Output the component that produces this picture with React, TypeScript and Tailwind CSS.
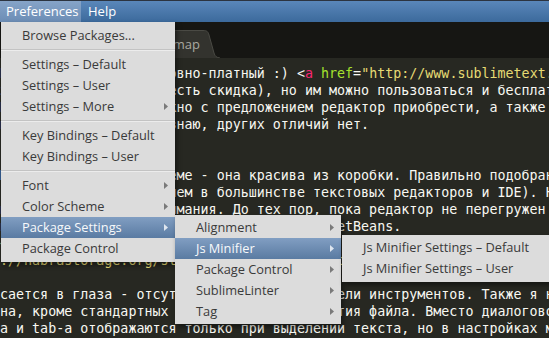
import { ReactNode } from 'react'

type Seg = [string, string]

interface CodeLine {
  pre?: string
  cols?: number
  segs: Seg[]
}

const W = 'text-[#f8f8f2]'
const P = 'text-[#f92672]'
const G = 'text-[#a6e22e]'
const Y = 'text-[#e6db74]'

const lines: CodeLine[] = [
  {
    pre: 'Редактор же, увы, усл',
    cols: 21,
    segs: [
      ['овно-платный :) ', W],
      ['<', W],
      ['a', P],
      [' ', W],
      ['href', G],
      ['=', W],
      ['"http://www.sublimetext.com/buy"', Y],
      ['>', W],
    ],
  },
  { pre: 'за $59 (для студентов ', cols: 21, segs: [['есть скидка), но им можно пользоваться и бесплатно.', W]] },
  { pre: 'Разница лишь в том, что о', cols: 21, segs: [['кно с предложением редактор приобрести, а также', W]] },
  { pre: 'появляется, и, нас', cols: 21, segs: [['знаю, других отличий нет.', W]] },
  { segs: [] },
  { segs: [] },
  { pre: 'Первое — цветовая сх', cols: 21, segs: [['еме - она красива из коробки. Правильно подобранная', W]] },
  { pre: '(куда приятнее, ', cols: 21, segs: [['чем в большинстве текстовых редакторов и IDE). На', W]] },
  { pre: 'и не отвлекает вн', cols: 21, segs: [['имания. До тех пор, пока редактор не перегружен', W]] },
  { pre: 'плагинами, он работает быстрее, чем ', cols: 41, segs: [['NetBeans.', W]] },
  { segs: [['<p><img src="http', Y]] },
  { segs: [['://habrastorage.org/storage2/3b1/1c8/8b5/3b11c88b5c1f.png"/></p>', Y]] },
  { segs: [] },
  { segs: [['сается в глаза - отсутствие какой-либо панели инструментов. Также я не нашёл', W]] },
  { segs: [['на, кроме стандартных окна поиска, и открытия файла. Вместо диалогового окна', W]] },
  { segs: [['а и tab-а отображаются только при выделении текста, но в настройках можно', W]] },
]

interface MenuEntry {
  label?: string
  sub?: boolean
  active?: boolean
  sep?: boolean
}

const mainMenu: MenuEntry[] = [
  { label: 'Browse Packages...' },
  { sep: true },
  { label: 'Settings – Default' },
  { label: 'Settings – User' },
  { label: 'Settings – More', sub: true },
  { sep: true },
  { label: 'Key Bindings – Default' },
  { label: 'Key Bindings – User' },
  { sep: true },
  { label: 'Font', sub: true },
  { label: 'Color Scheme', sub: true },
  { label: 'Package Settings', sub: true, active: true },
  { label: 'Package Control' },
]

const packageMenu: MenuEntry[] = [
  { label: 'Alignment', sub: true },
  { label: 'Js Minifier', sub: true, active: true },
  { label: 'Package Control', sub: true },
  { label: 'SublimeLinter', sub: true },
  { label: 'Tag', sub: true },
]

const minifierMenu: MenuEntry[] = [
  { label: 'Js Minifier Settings – Default' },
  { label: 'Js Minifier Settings – User' },
]

function Arrow({ light }: { light?: boolean }) {
  return (
    <svg width="4" height="7" viewBox="0 0 4 7" className="shrink-0">
      <path d="M0 0L4 3.5L0 7Z" fill={light ? '#dfe6ef' : '#7a7a7a'} />
    </svg>
  )
}

function MenuItems({ items }: { items: MenuEntry[] }) {
  return (
    <>
      {items.map((item, i) =>
        item.sep ? (
          <div key={i} className="h-[8px] flex flex-col justify-center">
            <div className="h-px bg-[#c3c3c3]" />
            <div className="h-px bg-[#ececec]" />
          </div>
        ) : (
          <div
            key={i}
            className={`h-[21px] flex items-center justify-between pl-[21px] pr-[7px] ${
              item.active
                ? 'bg-gradient-to-b from-[#819ec2] to-[#5a7ba2] text-[#f7f9fb]'
                : 'text-[#3a3a3a]'
            }`}
          >
            <span className="whitespace-nowrap">{item.label}</span>
            {item.sub && <Arrow light={item.active} />}
          </div>
        )
      )}
    </>
  )
}

function Menu({ className, children }: { className: string; children: ReactNode }) {
  return (
    <div
      className={`absolute bg-[#dcdcdc] font-['Open_Sans',sans-serif] text-[12.8px] shadow-[2px_3px_5px_rgba(0,0,0,0.45)] ${className}`}
    >
      {children}
    </div>
  )
}

export default function App() {
  return (
    <div className="relative w-[549px] h-[338px] overflow-hidden bg-[#272822] flex flex-col">
      {/* Menu bar */}
      <div className="h-[22px] shrink-0 flex items-stretch bg-gradient-to-b from-[#5a87ba] to-[#3c6a9c] border-t border-[#2c3440] font-['Open_Sans',sans-serif] text-[13px] text-white">
        <div className="w-[81px] flex items-center pl-[6px] bg-gradient-to-b from-[#86a4c8] to-[#6c8db5]">
          Preferences
        </div>
        <div className="flex items-center pl-[7px]">Help</div>
      </div>

      {/* Tab bar */}
      <div className="h-[36px] shrink-0 bg-[#161613] flex items-end">
        <div className="ml-[100px] w-[103px] h-[28px] bg-[#33332e] rounded-tl-[6px] border-t border-[#4a4a44] flex items-center justify-end pr-[3px] font-['Open_Sans',sans-serif] text-[13px] text-[#a9a9a1]">
          sitemap
        </div>
        <svg width="17" height="28" viewBox="0 0 17 28" className="shrink-0">
          <path d="M0 0.5C4 0.5 5 1.5 6 5L11 23C12 26.5 13.5 27.5 17 28L0 28Z" fill="#33332e" />
          <path d="M0 0.5C4 0.5 5 1.5 6 5L11 23C12 26.5 13.5 27.5 17 28" fill="none" stroke="#4a4a44" />
        </svg>
      </div>

      {/* Code */}
      <div className="flex-1 overflow-hidden pt-[7px] font-['DejaVu_Sans_Mono',monospace] text-[13.33px] leading-[17px]">
        {lines.map((line, i) => (
          <div key={i} className="h-[17px] whitespace-pre">
            {line.pre !== undefined && (
              <span
                className={`inline-block overflow-hidden align-top text-[#f8f8f2] ${
                  line.cols === 41 ? 'w-[41ch]' : 'w-[21ch]'
                }`}
              >
                {line.pre}
              </span>
            )}
            {line.segs.map(([text, color], j) => (
              <span key={j} className={color}>
                {text}
              </span>
            ))}
          </div>
        ))}
      </div>

      {/* Preferences menu */}
      <Menu className="left-[1px] top-[22px] w-[174px] py-[3px]">
        <MenuItems items={mainMenu} />
      </Menu>

      {/* Package Settings submenu */}
      <Menu className="left-[175px] top-[215px] w-[166px] pt-[2px] pb-[2px]">
        <MenuItems items={packageMenu} />
      </Menu>

      {/* Js Minifier submenu */}
      <Menu className="left-[342px] top-[235px] w-[230px] pt-[2px] pb-[3px]">
        <MenuItems items={minifierMenu} />
      </Menu>
    </div>
  )
}
